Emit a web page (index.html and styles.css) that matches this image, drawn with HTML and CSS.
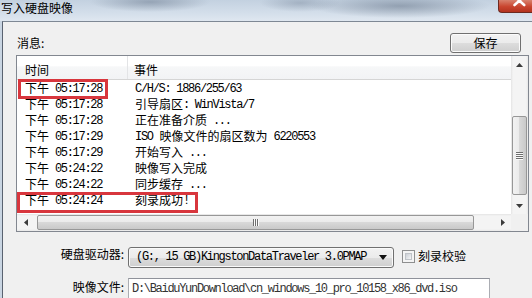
FILE: index.html
```html
<!DOCTYPE html>
<html lang="zh-CN">
<head>
<meta charset="utf-8">
<title>写入硬盘映像</title>
<link rel="stylesheet" href="styles.css">
</head>
<body>
<div class="window">
  <div class="titlebar">
    <span class="title">写入硬盘映像</span>
    <div class="close">
      <svg width="34" height="13" viewBox="0 0 34 13"><path d="M16 -4 L26 5 M26 -4 L16 5" stroke="#fff" stroke-width="2.6" stroke-linecap="round"/></svg>
    </div>
  </div>
  <div class="client">
    <div class="toprow">
      <span class="label msg">消息:</span>
      <div class="btn">保存</div>
    </div>
    <div class="listbox">
      <div class="view">
        <div class="header">
          <div class="hc c1">时间</div>
          <div class="hc c2">事件</div>
        </div>
        <div class="rows">
          <div class="row"><span class="t">下午<span class="m"> 05:17:28</span></span><span class="e"><span class="m">C/H/S: 1886/255/63</span></span></div>
          <div class="row"><span class="t">下午<span class="m"> 05:17:28</span></span><span class="e">引导扇区<span class="m">: WinVista/7</span></span></div>
          <div class="row"><span class="t">下午<span class="m"> 05:17:28</span></span><span class="e">正在准备介质<span class="m"> ...</span></span></div>
          <div class="row"><span class="t">下午<span class="m"> 05:17:29</span></span><span class="e"><span class="m">ISO </span>映像文件的扇区数为<span class="m"> 6220553</span></span></div>
          <div class="row"><span class="t">下午<span class="m"> 05:17:29</span></span><span class="e">开始写入<span class="m"> ...</span></span></div>
          <div class="row"><span class="t">下午<span class="m"> 05:24:22</span></span><span class="e">映像写入完成</span></div>
          <div class="row"><span class="t">下午<span class="m"> 05:24:22</span></span><span class="e">同步缓存<span class="m"> ...</span></span></div>
          <div class="row"><span class="t">下午<span class="m"> 05:24:24</span></span><span class="e">刻录成功<span class="m">!</span></span></div>
          <span class="mark mark1"></span>
          <span class="mark mark2"></span>
        </div>
      </div>
      <div class="vscroll">
        <div class="sbtn"><svg width="7" height="4" viewBox="0 0 7 4"><path d="M0 4 L3.5 0 L7 4 Z" fill="#3c3c3c"/></svg></div>
        <div class="vtrack"><div class="vthumb"><span class="grip"></span><span class="grip"></span><span class="grip"></span><span class="grip"></span></div></div>
        <div class="sbtn"><svg width="7" height="4" viewBox="0 0 7 4"><path d="M0 0 L3.5 4 L7 0 Z" fill="#3c3c3c"/></svg></div>
      </div>
      <div class="hscroll">
        <div class="sbtn"><svg width="4" height="7" viewBox="0 0 4 7"><path d="M4 0 L0 3.5 L4 7 Z" fill="#3c3c3c"/></svg></div>
        <div class="htrack"><div class="hthumb"><span class="vgrip"></span><span class="vgrip"></span><span class="vgrip"></span></div></div>
        <div class="sbtn"><svg width="4" height="7" viewBox="0 0 4 7"><path d="M0 0 L4 3.5 L0 7 Z" fill="#3c3c3c"/></svg></div>
      </div>
      <div class="corner"></div>
    </div>
    <div class="formrow first">
      <span class="label flabel l1">硬盘驱动器:</span>
      <div class="combo"><span class="m ctext">(G:, 15 GB)KingstonDataTraveler 3.0PMAP</span><svg class="carrow" width="8" height="5" viewBox="0 0 8 5"><path d="M0 0 L4 5 L8 0 Z" fill="#111"/></svg></div>
      <span class="check"><span class="checkin"></span></span>
      <span class="label chk">刻录校验</span>
    </div>
    <div class="formrow second">
      <span class="label flabel l2">映像文件:</span>
      <div class="textbox"><span class="m ttext">D:\BaiduYunDownload\cn_windows_10_pro_10158_x86_dvd.iso</span></div>
    </div>
  </div>
</div>
</body>
</html>
```
FILE: styles.css
```css
html, body { margin: 0; padding: 0; }
body {
  width: 532px; height: 298px; overflow: hidden;
  background: #c9d5e2;
  font-family: "Noto Sans CJK SC", "Liberation Sans", sans-serif;
  font-size: 12px; color: #000;
}
.window { display: flex; flex-direction: column; height: 298px; }
.titlebar {
  height: 21px; flex: none; display: flex; align-items: flex-start;
  background:
    radial-gradient(ellipse 60px 10px at 150px 2px, rgba(110,125,145,0.55), rgba(110,125,145,0)),
    radial-gradient(ellipse 90px 12px at 400px 6px, rgba(100,115,135,0.55), rgba(100,115,135,0)),
    radial-gradient(ellipse 40px 9px at 300px 3px, rgba(120,135,155,0.45), rgba(120,135,155,0)),
    linear-gradient(to bottom, #c3d1e0 0%, #d3deea 60%, #dfe7f0 100%);
}
.title { line-height: 16px; padding-left: 1px; }
.close {
  margin-left: auto; width: 34px; height: 13px;
  background: linear-gradient(to bottom, #d8816d 0%, #c9452f 55%, #b3331f 100%);
  border-left: 1px solid #6d2a20; border-bottom: 1px solid #6d2a20;
  border-bottom-left-radius: 4px; box-sizing: border-box;
  display: flex;
}
.client {
  flex: 1; display: flex; flex-direction: column;
  background: #f0f0f0;
  margin-left: 2px;
  border-left: 1px solid #596270; border-top: 1px solid #7e8894;
}
.toprow {
  display: flex; align-items: flex-start;
  margin-top: 11px; height: 20px; padding-left: 14px; padding-right: 11px;
}
.label { line-height: 16px; white-space: nowrap; }
.msg { padding-top: 2px; }
.btn {
  margin-left: auto; width: 71px; height: 20px; box-sizing: border-box;
  border: 1px solid #707070; border-radius: 3px;
  background: linear-gradient(to bottom, #f2f2f2 0%, #ebebeb 50%, #dddddd 51%, #cfcfcf 100%);
  box-shadow: inset 0 0 0 1px #fbfbfb;
  display: flex; align-items: center; justify-content: center;
  line-height: 16px;
}
.listbox {
  margin: 2px 3px 0 13px; height: 177px; box-sizing: border-box;
  border: 1px solid #828790; background: #fff;
  display: grid; grid-template-columns: 1fr 17px; grid-template-rows: 1fr 17px;
}
.view { overflow: hidden; }
.header {
  height: 23px; border-bottom: 1px solid #d5d5d5; display: flex;
  background: linear-gradient(to bottom, #ffffff 0%, #ffffff 45%, #f6f7f8 46%, #f2f3f5 100%);
}
.hc { line-height: 16px; padding-top: 6px; box-sizing: border-box; }
.c1 { width: 111px; padding-left: 8px; border-right: 1px solid #e3e4e6; }
.c2 { padding-left: 6px; }
.rows { display: flex; flex-direction: column; position: relative; }
.row { height: 16px; line-height: 16px; display: flex; white-space: pre; }
.t, .e { height: 16px; overflow: hidden; }
.t { width: 111px; padding-left: 8px; box-sizing: border-box; flex: none; }
.e { padding-left: 7px; flex: 1; }
.m { font-family: "Liberation Mono", "DejaVu Sans Mono", monospace; font-size: 12px; line-height: 11px; letter-spacing: -1.3px; padding-right: 1px; }
.row .m { vertical-align: 1px; }
.mark { position: absolute; border: 3px solid #d8363d; box-sizing: border-box; }
.mark1 { left: 1px; top: -1px; width: 90px; height: 20px; }
.mark2 { left: 0; top: 112px; width: 181px; height: 21px; }
.vscroll {
  display: flex; flex-direction: column;
  background: linear-gradient(to right, #e4e4e4 0%, #f4f4f4 12%, #f4f4f4 88%, #e8e8e8 100%);
}
.sbtn { width: 17px; height: 17px; flex: none; display: flex; align-items: center; justify-content: center; }
.vtrack { flex: 1; display: flex; flex-direction: column; }
.vthumb {
  margin-top: 43px; margin-left: 1px; width: 15px; height: 79px; box-sizing: border-box;
  border: 1px solid #979797; border-radius: 2px;
  background: linear-gradient(to right, #f2f2f2 0%, #ebebeb 45%, #d8d8d8 50%, #c9c9c9 100%);
  display: flex; flex-direction: column; align-items: center; justify-content: center; gap: 1px;
}
.grip { width: 7px; height: 1px; background: #6e6e6e; box-shadow: 0 1px 0 #fafafa; }
.hscroll {
  display: flex;
  background: linear-gradient(to bottom, #e4e4e4 0%, #f4f4f4 12%, #f4f4f4 88%, #e8e8e8 100%);
}
.htrack { flex: 1; display: flex; align-items: flex-start; }
.hthumb {
  margin-left: 3px; margin-top: 1px; width: 437px; height: 15px; box-sizing: border-box;
  border: 1px solid #979797; border-radius: 2px;
  background: linear-gradient(to bottom, #f2f2f2 0%, #ebebeb 45%, #d8d8d8 50%, #c9c9c9 100%);
  display: flex; align-items: center; justify-content: center; gap: 1px;
}
.vgrip { width: 1px; height: 7px; background: #6e6e6e; box-shadow: 1px 0 0 #fafafa; }
.corner { background: #f0f0f0; }
.formrow { display: flex; align-items: flex-start; }
.first { margin-top: 15px; }
.second { margin-top: 10px; }
.flabel { width: 121px; text-align: right; }
.l1 { margin-top: -1px; }
.l2 { margin-top: 1px; }
.combo {
  margin-left: 4px; width: 266px; height: 21px; box-sizing: border-box;
  border: 1px solid #707070; border-radius: 3px;
  background: linear-gradient(to bottom, #f2f2f2 0%, #ebebeb 50%, #dddddd 51%, #cfcfcf 100%);
  box-shadow: inset 0 0 0 1px #fafafa;
  display: flex; align-items: center; padding-left: 7px; padding-right: 6px;
  line-height: 16px; white-space: pre;
}
.carrow { margin-left: auto; }
.check {
  margin-left: 8px; margin-top: 3px; width: 13px; height: 13px; box-sizing: border-box;
  border: 1px solid #8e8f8f; background: #f4f4f4; padding: 2px; display: flex;
}
.checkin { flex: 1; background: linear-gradient(135deg, #cbcfd5 0%, #e4e6e9 60%, #f6f6f6 100%); border: 1px solid #bfc3c8; }
.chk { margin-left: 3px; margin-top: 1px; }
.textbox {
  margin-left: 4px; width: 362px; height: 22px; box-sizing: border-box;
  border: 1px solid #abadb3; border-top-color: #8f929a;
  background: #fff; display: flex; align-items: center; padding-left: 3px;
  line-height: 16px; white-space: pre; color: #333;
}
```
